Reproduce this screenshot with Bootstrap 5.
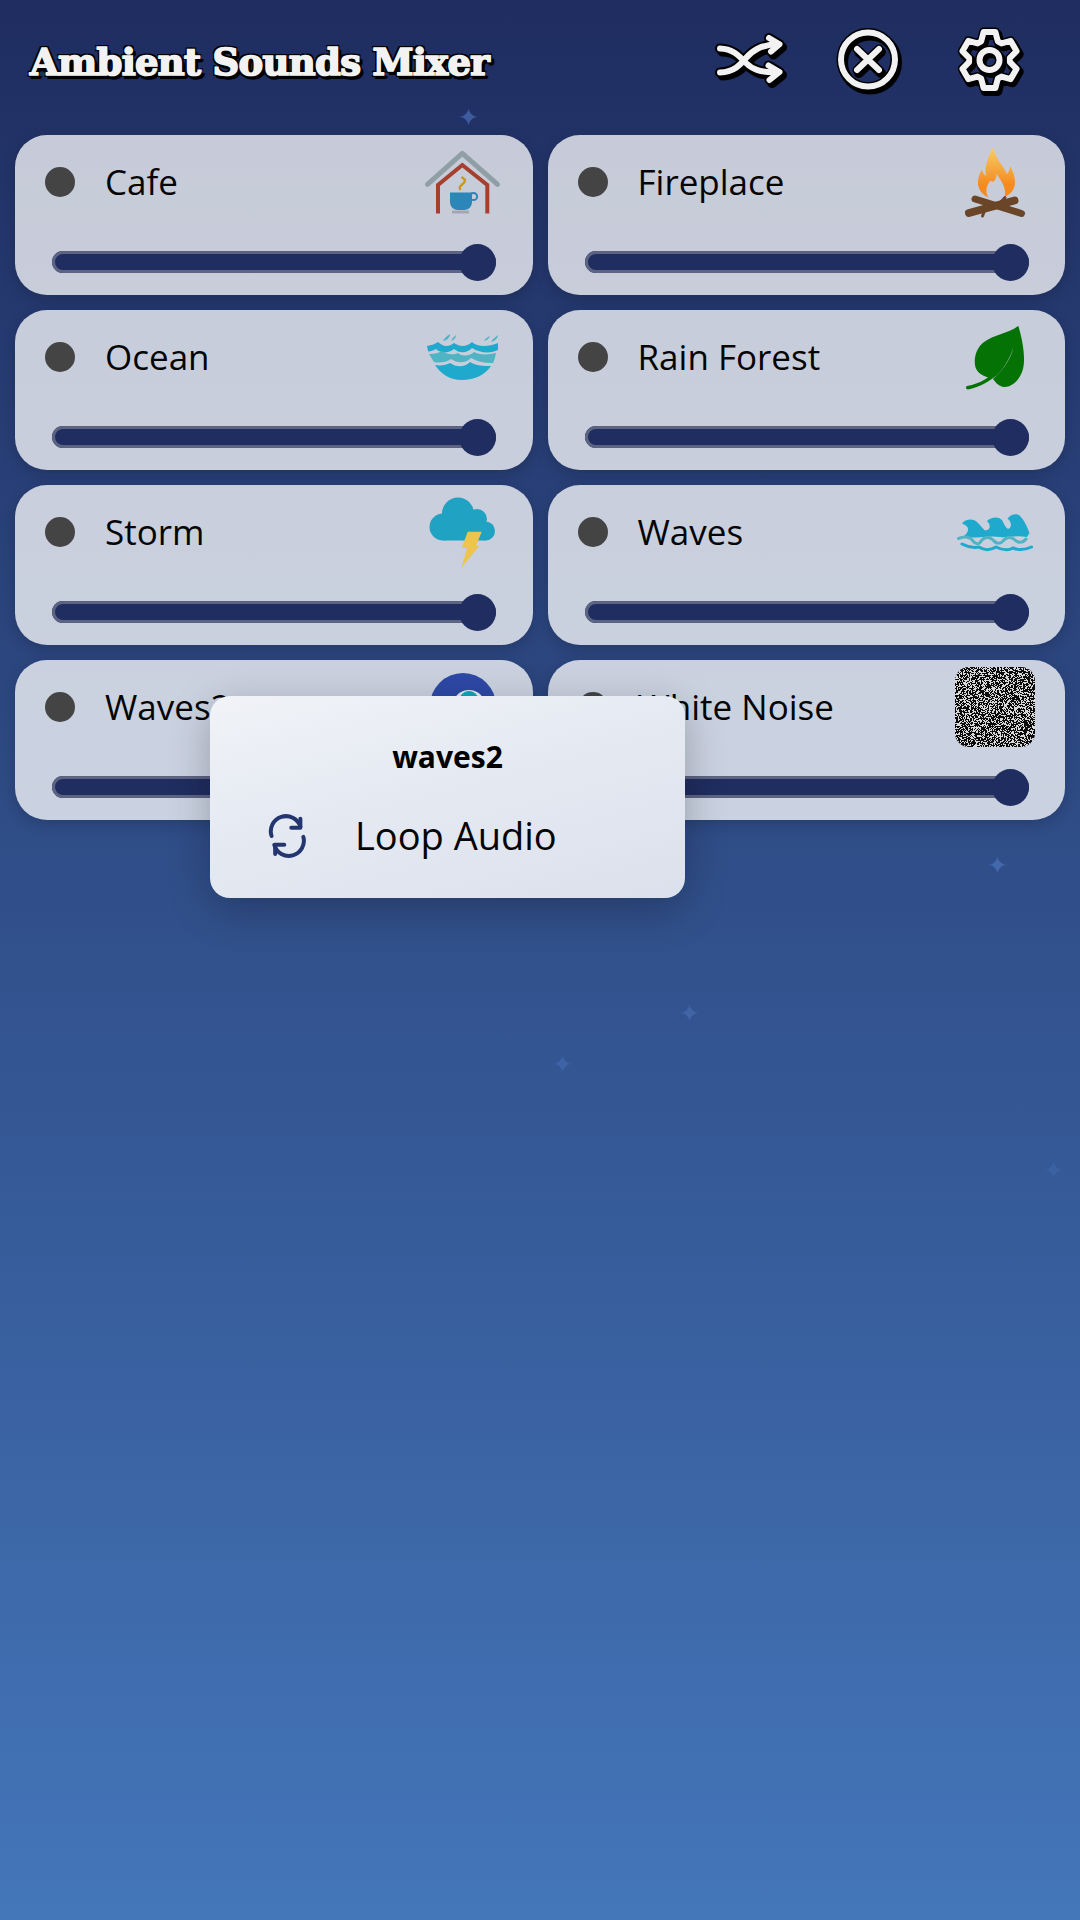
<!DOCTYPE html>
<html lang="en">
<head>
  <meta charset="UTF-8">
  <meta name="viewport" content="width=device-width, initial-scale=1.0">
  <title>Ambient Sounds Mixer</title>
  <link href="https://cdn.jsdelivr.net/npm/bootstrap@5.3.0/dist/css/bootstrap.min.css" rel="stylesheet">
  <style>
    body {
      height: 1920px;
      overflow: hidden;
      background: linear-gradient(180deg, #1f2d60 0%, #4476ba 100%);
      font-family: "Open Sans", "Noto Sans", sans-serif;
      position: relative;
    }
    .top-bar {
      height: 135px;
      padding: 0 52px 15px 30px;
    }
    .app-title {
      font-family: "DejaVu Serif", "Liberation Serif", serif;
      font-weight: 700;
      font-size: 37px;
      letter-spacing: -.7px;
      margin: 5px 0 0 0;
      color: #f2f2f2;
      -webkit-text-stroke: 1.7px #f2f2f2;
      text-shadow: 2px 2px 0 #000, -2px -2px 0 #000, 2px -2px 0 #000, -2px 2px 0 #000, 4px 3px 0 #000, 1px 4px 0 #000, 3px 4px 0 #000;
    }
    .top-icons { gap: 39px; }
    .top-icons svg { width: 80px; height: 80px; display: block; }
    .sound-list { padding: 0 15px; }
    .sound-row { --bs-gutter-x: 15px; --bs-gutter-y: 15px; }
    .sound-card {
      height: 160px;
      padding: 7px 30px 0 30px;
      border-radius: 32px;
      background: rgba(255, 255, 255, .75);
      box-shadow: 0 4px 14px rgba(0, 0, 0, .18);
    }
    .led {
      width: 30px;
      height: 30px;
      border-radius: 50%;
      background: #444;
      flex-shrink: 0;
    }
    .sound-name {
      font-size: 35px;
      color: #050505;
      margin: -2px 0 0 30px;
      line-height: 1;
    }
    .sound-pic { width: 80px; height: 80px; display: block; flex-shrink: 0; }
    .noise-pic { border-radius: 14px; }
    .sound-range {
      display: block;
      width: 444px;
      height: 38px;
      margin: 21px 0 0 7px;
      padding: 0;
    }
    .sound-range::-webkit-slider-runnable-track {
      height: 22px;
      border-radius: 11px;
      background: #1f2d60;
      box-shadow: inset 0 0 0 3px #5d6482;
    }
    .sound-range::-webkit-slider-thumb {
      -webkit-appearance: none;
      width: 37px;
      height: 37px;
      margin-top: -7.5px;
      border-radius: 50%;
      background: #1f2d60;
      border: 0;
    }
    .sound-range:focus::-webkit-slider-thumb { box-shadow: none; }
    .ctx-menu {
      position: absolute;
      left: 210px;
      top: 696px;
      width: 475px;
      height: 202px;
      border-radius: 20px;
      background: linear-gradient(165deg, #f1f3f7 0%, #e5e9f2 45%, #dbe1ec 100%);
      box-shadow: 0 12px 40px rgba(0, 0, 0, .25);
    }
    .ctx-title {
      font-size: 30px;
      font-weight: 700;
      color: #000;
      line-height: 1;
      margin-top: 46px;
    }
    .ctx-item {
      margin: 39px 0 0 57px;
      font-size: 38px;
      line-height: 1;
      color: #050505;
    }
    .ctx-item svg { width: 40px; height: 44px; margin: 3px 48px 0 0; }
    .spark {
      position: absolute;
      font-family: "DejaVu Sans", sans-serif;
      font-size: 25px;
      line-height: 1;
      color: rgba(82, 122, 196, .6);
    }
    .spark-a { left: 458px; top: 105px; }
    .spark-b { left: 987px; top: 853px; }
    .spark-c { left: 679px; top: 1001px; color: rgba(82, 122, 196, .45); }
    .spark-d { left: 552px; top: 1052px; color: rgba(82, 122, 196, .4); }
    .spark-e { left: 1043px; top: 1158px; color: rgba(82, 122, 196, .25); }
  </style>
</head>
<body>

<span class="spark spark-a">✦</span>
<span class="spark spark-b">✦</span>
<span class="spark spark-c">✦</span>
<span class="spark spark-d">✦</span>
<span class="spark spark-e">✦</span>

<!-- header -->
<header class="top-bar d-flex align-items-center justify-content-between">
  <h1 class="app-title">Ambient Sounds Mixer</h1>
  <div class="top-icons d-flex">
    <svg viewBox="0 0 80 80" fill="none" stroke-linecap="round" stroke-linejoin="round">
      <defs>
        <g id="shuffleShape">
          <path d="M10 28.5C24 29 30 37 36 43C42 49 50 53 68 52"/>
          <path d="M10 52.5C24 52 30 45 36 38C42 31 50 25 68 24"/>
          <path d="M59 18L69.5 24.3L61 31.5"/>
          <path d="M58.5 45.5L69.5 52L59.5 60"/>
        </g>
      </defs>
      <use href="#shuffleShape" stroke="#000" stroke-width="10" transform="translate(2.5,3)"/>
      <use href="#shuffleShape" stroke="#000" stroke-width="10"/>
      <use href="#shuffleShape" stroke="#f2f2f2" stroke-width="6"/>
    </svg>
    <svg viewBox="0 0 80 80" fill="none" stroke-linecap="round" stroke-linejoin="round">
      <defs>
        <g id="closeShape">
          <circle cx="39" cy="39.5" r="27"/>
          <path d="M28 29L50 50M50 29L28 50"/>
        </g>
      </defs>
      <use href="#closeShape" stroke="#000" stroke-width="10" transform="translate(2,3)"/>
      <use href="#closeShape" stroke="#000" stroke-width="9"/>
      <use href="#closeShape" stroke="#f2f2f2" stroke-width="6"/>
    </svg>
    <svg viewBox="0 0 80 80" fill="none" stroke-linecap="round" stroke-linejoin="round">
      <defs>
        <g id="gearShape">
          <path id="gearOutline"/>
          <circle cx="41.5" cy="40" r="10"/>
        </g>
      </defs>
      <use href="#gearShape" stroke="#000" stroke-width="10" transform="translate(2,3)"/>
      <use href="#gearShape" stroke="#000" stroke-width="9"/>
      <use href="#gearShape" stroke="#f2f2f2" stroke-width="6"/>
    </svg>
  </div>
</header>

<!-- sound cards -->
<main class="sound-list">
  <div class="row row-cols-2 sound-row">

    <div class="col">
      <div class="sound-card">
        <div class="d-flex align-items-center">
          <span class="led"></span>
          <span class="sound-name flex-grow-1">Cafe</span>
          <svg class="sound-pic" viewBox="1 0 80 80" fill="none">
            <path d="M5.5 42.3L40.3 11.3L75.5 42.3" stroke="#909fa5" stroke-width="5" stroke-linecap="round" stroke-linejoin="round"/>
            <path d="M16 71.5V43L40.3 23L65.3 43V71.5" stroke="#a5402f" stroke-width="4"/>
            <path d="M28 50.5H50V60C50 65 46 68 42 68H36C32 68 28 65 28 60Z" fill="#2c86b8"/>
            <circle cx="51.5" cy="54.5" r="3.6" stroke="#2c86b8" stroke-width="2"/>
            <rect x="30" y="68.5" width="17" height="3" fill="#a3a8ad"/>
            <path d="M38.5 48C35 44 43 42 43 38.5C43 37 41 36 39.5 35" stroke="#c9971c" stroke-width="2.4"/>
          </svg>
        </div>
        <input type="range" class="form-range sound-range" value="100" aria-label="Cafe">
      </div>
    </div>

    <div class="col">
      <div class="sound-card">
        <div class="d-flex align-items-center">
          <span class="led"></span>
          <span class="sound-name flex-grow-1">Fireplace</span>
          <svg class="sound-pic" viewBox="0 0 80 80">
            <defs>
              <linearGradient id="flameFill" x1="0" y1="0" x2="0" y2="1">
                <stop offset="0" stop-color="#f5d069"/>
                <stop offset=".75" stop-color="#f58a1f"/>
              </linearGradient>
            </defs>
            <path fill="url(#flameFill)" d="M38.5 5C39 14 47 22 52 32C54 30 55 27 55 24C59 31 61 38 59.5 44C58 50 54 53 49.5 55C52 47 47 40 41.7 32C41 38 38 42 35.5 38.5C31 44 30 50 33.5 55.5C28 53 23 48 23 41C23 35 25 30 27 28C28 31 29 33 31 34C29 24 34 12 38.5 5Z"/>
            <g stroke="#6b4527" stroke-linecap="round" fill="none">
              <path d="M14 71L59.5 58.5" stroke-width="8"/>
              <path d="M20 57L66.5 71.5" stroke-width="7"/>
              <path d="M45 61L50 55.5M29 70L27.5 74" stroke-width="3"/>
            </g>
          </svg>
        </div>
        <input type="range" class="form-range sound-range" value="100" aria-label="Fireplace">
      </div>
    </div>

    <div class="col">
      <div class="sound-card">
        <div class="d-flex align-items-center">
          <span class="led"></span>
          <span class="sound-name flex-grow-1">Ocean</span>
          <svg class="sound-pic" viewBox="1 0 80 80">
            <path fill="#1fa9cc" d="M5 29C10 28 13 27 16 25C20 29 26 31 32 26C36 29 44 31 50 25C55 30 66 30 76 26L76 33C68 37 58 36 50 31C44 37 37 36 32 32C26 37 18 36 14 32C10 34 7 35 6 34Z"/>
            <path fill="#4fb4c4" d="M7 37C13 37 17 36 20 34C25 38 32 38 36 36C41 40 48 39 52 35C57 38 66 38 74 36C73 41 72 44 71 46C63 46 56 45 49 41C43 47 35 46 29 42C23 46 17 46 12 45Z"/>
            <path fill="#1fa9cc" d="M13 48C19 49 24 48 28 46C34 50 42 51 48 45C54 49 62 49 69 49C63 58 52 63 40 63C28 63 19 57 13 48Z"/>
            <path fill="#4fb4c4" d="M21 24C22 21 25 19 28 17C28 20 26 23 21 24ZM29 24C30 21 33 19 34 18C34 21 32 23 29 24ZM62 24C63 22 65 20 68 19C67 21 66 23 62 24ZM69 25C70 23 73 20 76 18C76 21 73 24 69 25Z"/>
          </svg>
        </div>
        <input type="range" class="form-range sound-range" value="100" aria-label="Ocean">
      </div>
    </div>

    <div class="col">
      <div class="sound-card">
        <div class="d-flex align-items-center">
          <span class="led"></span>
          <span class="sound-name flex-grow-1">Rain Forest</span>
          <svg class="sound-pic" viewBox="0 0 80 80">
            <path fill="#047204" d="M63.3 8.7C55 16 38 18 29 25C21 31 19 41 20 48C21 55 26 58 33 60.5C27 65 18 68 12 69C10 70 11 72 13 72.5C24 70 34 65 42 58C50 50 55 41 58.5 29.5C56 41 50 51 38 62C41 66 44 69.5 49 70C57 70.5 65 63 68 52C71 40 67 21 63.3 8.7Z"/>
          </svg>
        </div>
        <input type="range" class="form-range sound-range" value="100" aria-label="Rain Forest">
      </div>
    </div>

    <div class="col">
      <div class="sound-card">
        <div class="d-flex align-items-center">
          <span class="led"></span>
          <span class="sound-name flex-grow-1">Storm</span>
          <svg class="sound-pic" viewBox="0 0 80 80">
            <g fill="#20a2c3">
              <circle cx="35" cy="21.5" r="16"/>
              <circle cx="54" cy="27" r="10"/>
              <circle cx="20" cy="35" r="13.5"/>
              <circle cx="62.5" cy="39" r="9.5"/>
              <rect x="20" y="28" width="42.5" height="20.5"/>
            </g>
            <path fill="#ecc44e" d="M44.7 39.7H58.7L53 54H56.3L38.7 75.3L44 56H38.7Z"/>
          </svg>
        </div>
        <input type="range" class="form-range sound-range" value="100" aria-label="Storm">
      </div>
    </div>

    <div class="col">
      <div class="sound-card">
        <div class="d-flex align-items-center">
          <span class="led"></span>
          <span class="sound-name flex-grow-1">Waves</span>
          <svg class="sound-pic" viewBox="0 0 80 80">
            <path fill="#1fa9cc" d="M8 45C14 40 16 35 7 31.5C10 27 18 26 22 30C26 34 28 37 30 38.5C36 38 36 33 32 29C36 25 43 24 47 28C49 32 51 36 53 37C57 36 57 30 52.5 26.5C56 22 62 21 65 24C70 29 72 35 74.5 41L72 45C60 43 52 46 45 45C35 43 20 47 8 45Z"/>
            <g fill="none" stroke-linecap="round">
              <path d="M3.5 46.5C10 44 15 45 18 49C21 53 25 52 26 49C29 45 34 44 38 48C41 52 46 52 48 49C51 45 56 44 60 48C63 51 68 51 71 47" stroke="#4fb4c4" stroke-width="3"/>
              <path d="M7 52C13 55 19 56 24 55C30 59 36 58 41 55C47 58 53 59 58 56C63 58 70 58 76.5 55" stroke="#1fa9cc" stroke-width="3"/>
            </g>
          </svg>
        </div>
        <input type="range" class="form-range sound-range" value="100" aria-label="Waves">
      </div>
    </div>

    <div class="col">
      <div class="sound-card">
        <div class="d-flex align-items-center">
          <span class="led"></span>
          <span class="sound-name flex-grow-1">Waves2</span>
          <svg class="sound-pic" viewBox="0 0 80 80">
            <circle cx="40" cy="39" r="33" fill="#2d48a6"/>
            <ellipse cx="46" cy="36" rx="15" ry="13" fill="#e6edf2"/>
            <ellipse cx="46" cy="38" rx="11" ry="14" fill="#14a5b5"/>
          </svg>
        </div>
        <input type="range" class="form-range sound-range" value="100" aria-label="Waves2">
      </div>
    </div>

    <div class="col">
      <div class="sound-card">
        <div class="d-flex align-items-center">
          <span class="led"></span>
          <span class="sound-name flex-grow-1">White Noise</span>
          <canvas id="noisePic" class="sound-pic noise-pic" width="80" height="80"></canvas>
        </div>
        <input type="range" class="form-range sound-range" value="100" aria-label="White Noise">
      </div>
    </div>

  </div>
</main>

<!-- long press menu -->
<div class="ctx-menu">
  <div class="ctx-title text-center">waves2</div>
  <div class="ctx-item d-flex align-items-center">
    <svg viewBox="0 0 44 48" fill="none" stroke="#24366f" stroke-width="4.4" stroke-linecap="round" stroke-linejoin="round">
      <path d="M5 24A16.5 16.5 0 0 1 36.7 13.7"/>
      <path d="M36.7 5V15H26.7"/>
      <path d="M40 25A16.5 16.5 0 0 1 8 33.7"/>
      <path d="M9 43.7V33.7H19"/>
    </svg>
    <span>Loop Audio</span>
  </div>
</div>

<script src="https://cdn.jsdelivr.net/npm/bootstrap@5.3.0/dist/js/bootstrap.bundle.min.js"></script>
<script>
  // gear outline, six rounded teeth
  function gearPath(cx, cy) {
    let d = '';
    for (let i = 0; i < 6; i++) {
      const a = -90 + i * 60;
      const pts = [[a - 24, 20.5], [a - 12, 28.5], [a + 12, 28.5], [a + 24, 20.5]];
      pts.forEach((p, j) => {
        const r = p[0] * Math.PI / 180;
        const x = (cx + p[1] * Math.cos(r)).toFixed(1);
        const y = (cy + p[1] * Math.sin(r)).toFixed(1);
        d += (i === 0 && j === 0 ? 'M' : 'L') + x + ' ' + y;
      });
    }
    return d + 'Z';
  }
  document.getElementById('gearOutline').setAttribute('d', gearPath(41.5, 40));

  // white noise thumbnail
  const ctx = document.getElementById('noisePic').getContext('2d');
  let seed = 12345;
  function rnd() {
    seed = (seed * 16807) % 2147483647;
    return seed / 2147483647;
  }
  for (let y = 0; y < 80; y++) {
    for (let x = 0; x < 80; x++) {
      ctx.fillStyle = rnd() < 0.58 ? '#0c0c0c' : '#d9d9d9';
      ctx.fillRect(x, y, 1, 1);
    }
  }
</script>
</body>
</html>
